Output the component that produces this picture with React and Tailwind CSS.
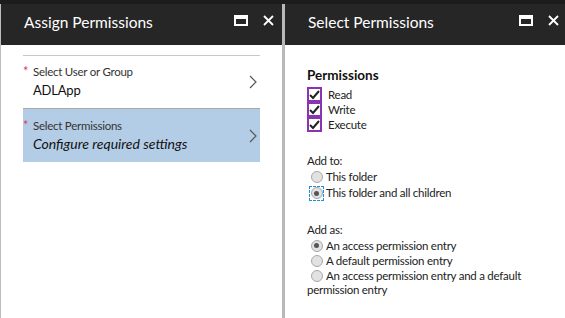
import React from "react";

const font = { fontFamily: 'Lato, "Open Sans", sans-serif' };

const MaxIcon = () => (
  <svg width="14" height="11" viewBox="0 0 14 11">
    <rect x="1" y="1" width="12" height="9" fill="none" stroke="#fff" strokeWidth="2" />
    <rect x="1" y="1" width="12" height="3" fill="#fff" />
  </svg>
);

const CloseIcon = () => (
  <svg width="11" height="11" viewBox="0 0 11 11">
    <path d="M1 1L10 10M10 1L1 10" stroke="#fff" strokeWidth="1.8" />
  </svg>
);

const Chevron = () => (
  <svg width="8" height="14" viewBox="0 0 8 14">
    <path d="M1 1L7 7L1 13" fill="none" stroke="#555" strokeWidth="1.2" />
  </svg>
);

const Check = () => (
  <span className="w-[15px] h-[15px] flex-none border-2 border-[#8a34b4] flex items-center justify-center">
    <svg width="11" height="10" viewBox="0 0 11 10">
      <path d="M1 5L4 8L10 1" fill="none" stroke="#222" strokeWidth="2" />
    </svg>
  </span>
);

const Radio = ({ on, focus }) => (
  <span
    className={
      focus
        ? "w-[15px] h-[15px] flex-none flex items-center justify-center border border-dashed border-[#1e90d8]"
        : "w-[15px] h-[15px] flex-none flex items-center justify-center"
    }
  >
    <span className="w-[12px] h-[12px] rounded-full border border-[#a8a8a8] bg-[#e2e2e2] flex items-center justify-center">
      {on && <span className="w-[5px] h-[5px] rounded-full bg-[#555]" />}
    </span>
  </span>
);

const Header = ({ title, pr }) => (
  <div className={"h-[41px] flex-none bg-[#262626] flex items-start pt-[7px] pl-[23px] " + pr}>
    <span className="text-white text-[15.5px] leading-[22px] flex-1">{title}</span>
    <div className="flex items-center gap-[15px] h-[22px] mt-[-2px]">
      <MaxIcon />
      <CloseIcon />
    </div>
  </div>
);

const App = () => {
  return (
    <div className="w-[565px] h-[318px] flex flex-col bg-[#1c1c1c] overflow-hidden" style={font}>
      <div className="h-[4px] flex-none" />
      <div className="flex flex-1 min-h-0">
        {/* Assign Permissions */}
        <div className="w-[282px] flex-none flex flex-col border-l border-[#bdbdbd] bg-white">
          <Header title="Assign Permissions" pr="pr-[8px]" />
          <div className="px-[22px] pt-[10px]">
            <div className="border-t border-[#c8c8c8] h-[53px] flex items-center pr-[3px]">
              <div className="flex-1 flex flex-col">
                <div className="flex items-start text-[11.5px] tracking-[-0.25px] text-[#333] leading-[16px]">
                  <span className="text-[#e0405e] w-[10px] text-[13px] leading-[15px]">*</span>
                  <span>Select User or Group</span>
                </div>
                <span className="pl-[10px] text-[13px] tracking-[-0.2px] text-[#111] leading-[20px]">ADLApp</span>
              </div>
              <Chevron />
            </div>
            <div className="border-t border-[#a8a8a8] h-[54px] flex items-center pr-[3px] bg-[#b4cde6]">
              <div className="flex-1 flex flex-col">
                <div className="flex items-start text-[11.5px] tracking-[-0.25px] text-[#333] leading-[16px]">
                  <span className="text-[#e0405e] w-[10px] text-[13px] leading-[15px]">*</span>
                  <span>Select Permissions</span>
                </div>
                <span className="pl-[10px] text-[14px] italic text-[#111] leading-[20px]">
                  Configure required settings
                </span>
              </div>
              <Chevron />
            </div>
          </div>
        </div>
        <div className="w-[3px] flex-none bg-[#b8b8b8]" />
        {/* Select Permissions */}
        <div className="flex-1 flex flex-col bg-white">
          <Header title="Select Permissions" pr="pr-[6px]" />
          <div className="pl-[22px] pt-[21px] text-[11.5px] tracking-[-0.25px] text-[#222]">
            <div className="text-[13.5px] tracking-normal font-bold text-[#111] leading-[18px]">Permissions</div>
            <div className="flex flex-col mt-[3px]">
              {["Read", "Write", "Execute"].map((t) => (
                <div key={t} className="flex items-center gap-[6px] h-[15px] leading-[15px]">
                  <Check />
                  <span>{t}</span>
                </div>
              ))}
            </div>
            <div className="mt-[21px] leading-[16px]">Add to:</div>
            <div className="pl-[2px] flex flex-col">
              <div className="flex items-center gap-[2px] h-[16px] leading-[16px]">
                <Radio />
                <span>This folder</span>
              </div>
              <div className="flex items-center gap-[2px] h-[16px] leading-[16px]">
                <Radio on focus />
                <span>This folder and all children</span>
              </div>
            </div>
            <div className="mt-[21px] leading-[16px]">Add as:</div>
            <div className="flex flex-col">
              <div className="pl-[2px] flex items-center gap-[2px] h-[15px] leading-[15px]">
                <Radio on />
                <span>An access permission entry</span>
              </div>
              <div className="pl-[2px] flex items-center gap-[2px] h-[15px] leading-[15px]">
                <Radio />
                <span>A default permission entry</span>
              </div>
              <div className="pl-[2px] flex items-center gap-[2px] h-[15px] leading-[15px]">
                <Radio />
                <span>An access permission entry and a default</span>
              </div>
              <div className="leading-[13px]">permission entry</div>
            </div>
          </div>
        </div>
      </div>
    </div>
  );
};

export default App;
